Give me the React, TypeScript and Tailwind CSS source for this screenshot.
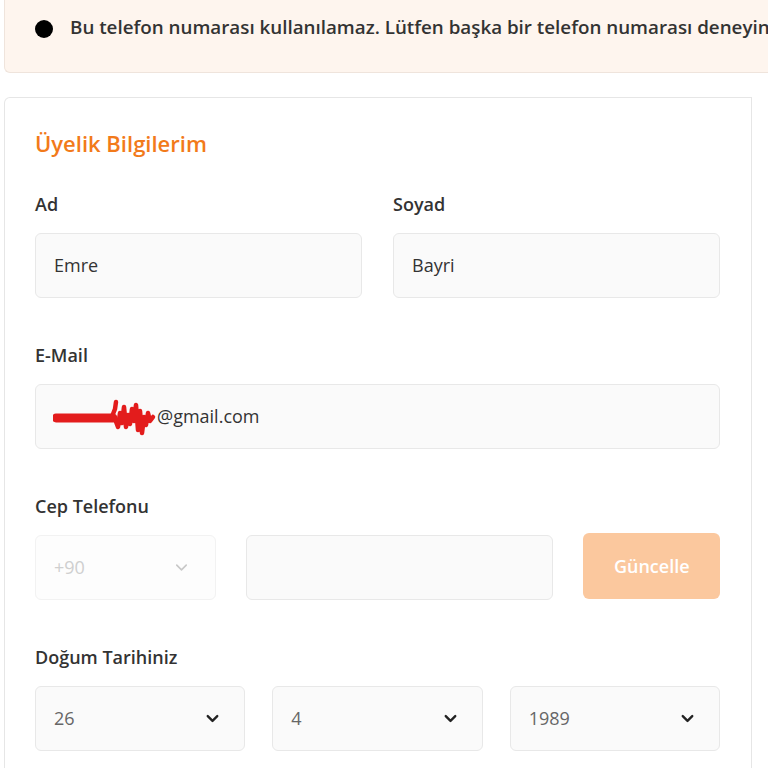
import { ChevronDown } from "lucide-react";

function Label({ children }: { children: React.ReactNode }) {
  return <div className="h-6 leading-6 text-[18px] font-semibold text-[#333]">{children}</div>;
}

function Field({ value }: { value: string }) {
  return (
    <div className="h-[65px] flex items-center px-[18px] rounded-md border border-[#e8e8e8] bg-[#fafafa] text-[18px] text-[#333]">
      {value}
    </div>
  );
}

function Select({ value }: { value: string }) {
  return (
    <div className="h-[65px] flex items-center justify-between pl-[18px] pr-[22px] rounded-md border border-[#e8e8e8] bg-[#fafafa] text-[18px] text-[#666]">
      <span>{value}</span>
      <ChevronDown size={19} strokeWidth={3} className="text-[#222]" />
    </div>
  );
}

function Scribble() {
  return (
    <svg width="106" height="40" viewBox="0 0 106 40" className="-ml-[1px] mr-[-2px]">
      <path d="M3 21 L60 21" stroke="#e31c1c" strokeWidth="9" strokeLinecap="round" fill="none" />
      <path
        d="M58 22 L62 12 L63 5 M62 22 L65 30 L67 16 L69 26 L71 10 L73 30 L75 18 L77 27 L79 12 L81 24 L83 8 L85 33 L87 14 L89 36 L91 20 L93 28 L95 16 L97 24 L100 20"
        stroke="#e31c1c"
        strokeWidth="4.5"
        fill="none"
        strokeLinecap="round"
        strokeLinejoin="round"
      />
    </svg>
  );
}

export default function App() {
  return (
    <div className="w-[768px] h-[768px] overflow-hidden bg-white pl-[4px] font-['Open_Sans',sans-serif]">
      <div className="h-[73px] rounded-bl-md border-b border-l border-[#efe4dc] bg-[#fef5ee] flex items-start pt-[13px] pl-[30px] whitespace-nowrap">
        <span className="mt-[7px] mr-[17px] w-[18px] h-[18px] shrink-0 rounded-full bg-black" />
        <span className="text-[18.8px] font-semibold text-[#333]">
          Bu telefon numarası kullanılamaz. Lütfen başka bir telefon numarası deneyin.
        </span>
      </div>

      <div className="mt-[24px] w-[748px] h-[700px] rounded-tl-md border-t border-l border-r border-[#e6e6e6] pt-[31px] pl-[30px] pr-[31px]">
        <h2 className="h-7 leading-7 text-[22px] font-semibold text-[#f27a1a]">Üyelik Bilgilerim</h2>

        <div className="mt-[35px] grid grid-cols-2 gap-x-[31px]">
          <div>
            <Label>Ad</Label>
            <div className="mt-[17px]">
              <Field value="Emre" />
            </div>
          </div>
          <div>
            <Label>Soyad</Label>
            <div className="mt-[17px]">
              <Field value="Bayri" />
            </div>
          </div>
        </div>

        <div className="mt-[45px]">
          <Label>E-Mail</Label>
          <div className="mt-[17px] h-[65px] flex items-center px-[18px] rounded-md border border-[#e8e8e8] bg-[#fafafa] text-[18px] text-[#333]">
            <Scribble />
            <span>@gmail.com</span>
          </div>
        </div>

        <div className="mt-[45px]">
          <Label>Cep Telefonu</Label>
          <div className="mt-[17px] flex items-start gap-[30px]">
            <div className="w-[181px] h-[65px] flex items-center justify-between pl-[18px] pr-[24px] rounded-md border border-[#f2f2f2] bg-[#fdfdfd] text-[18px] text-[#cfcfcf]">
              <span>+90</span>
              <ChevronDown size={19} strokeWidth={2} className="text-[#c8c8c8]" />
            </div>
            <div className="w-[309px] h-[65px] rounded-md border border-[#e8e8e8] bg-[#fafafa]" />
            <button className="-mt-[2px] w-[137px] h-[66px] rounded-md bg-[#fbc89e] text-[18px] font-semibold text-white">
              Güncelle
            </button>
          </div>
        </div>

        <div className="mt-[45px]">
          <Label>Doğum Tarihiniz</Label>
          <div className="mt-[17px] grid grid-cols-3 gap-[27px]">
            <Select value="26" />
            <Select value="4" />
            <Select value="1989" />
          </div>
        </div>
      </div>
    </div>
  );
}
